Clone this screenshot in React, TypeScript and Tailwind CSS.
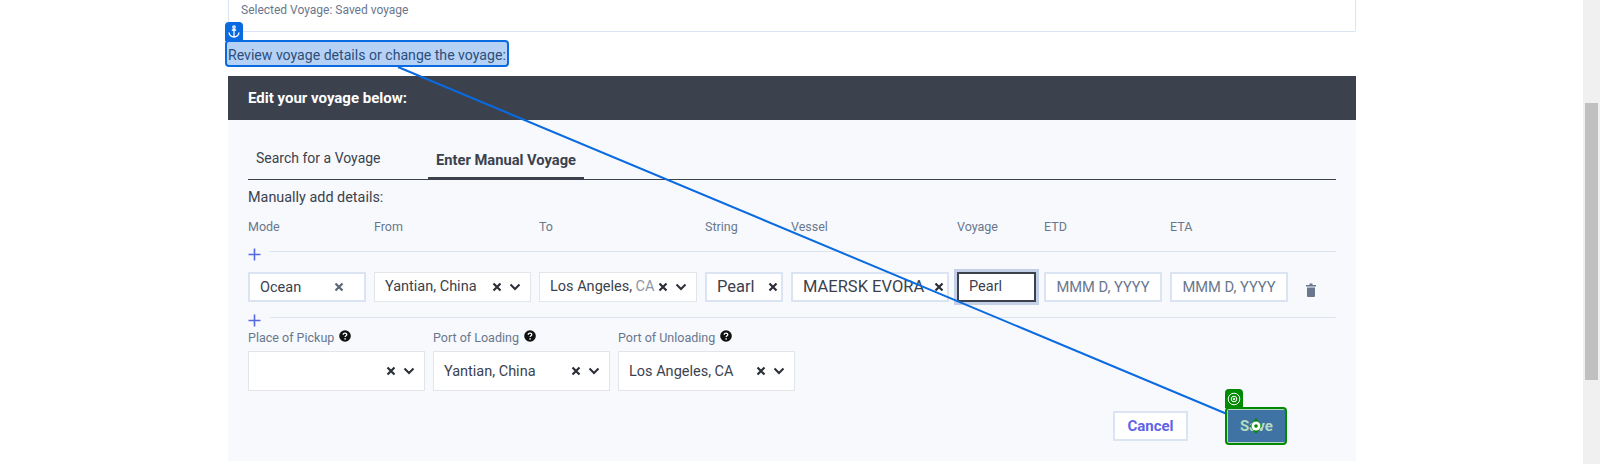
import React from "react";

const X = ({ c = "#2b2f36" }: { c?: string }) => (
  <svg width="10" height="10" viewBox="0 0 10 10" className="shrink-0">
    <path d="M1.5 1.5l7 7M8.5 1.5l-7 7" stroke={c} strokeWidth="2.2" />
  </svg>
);
const Chev = () => (
  <svg width="12" height="8" viewBox="0 0 12 8" className="shrink-0">
    <path d="M1.5 1.5L6 6l4.5-4.5" stroke="#2b2f36" strokeWidth="2" fill="none" />
  </svg>
);
const Plus = () => (
  <svg width="13" height="13" viewBox="0 0 13 13" className="shrink-0">
    <path d="M6.5 0.5v12M0.5 6.5h12" stroke="#5468e0" strokeWidth="1.6" />
  </svg>
);
const Help = () => (
  <svg width="12" height="12" viewBox="0 0 12 12" className="shrink-0">
    <circle cx="6" cy="6" r="5.8" fill="#111" />
    <path d="M4.2 4.7c0-1 .8-1.6 1.8-1.6s1.8.6 1.8 1.5c0 1.2-1.7 1.2-1.7 2.5" stroke="#fff" strokeWidth="1.3" fill="none" />
    <circle cx="6.1" cy="8.9" r=".8" fill="#fff" />
  </svg>
);
const Divider = () => (
  <div className="flex items-center gap-[9px] h-[13px]">
    <Plus />
    <div className="flex-1 h-px bg-[#dde4f1] -mt-[6px]" />
  </div>
);
const Label = ({ children, className = "" }: { children: React.ReactNode; className?: string }) => (
  <span className={"text-[12.5px] leading-[16px] text-[#69778d] " + className}>{children}</span>
);
const SelectBox = ({ text, tall, w }: { text?: React.ReactNode; tall?: boolean; w: string }) => (
  <div className={`${w} ${tall ? "h-[40px]" : "h-[30px]"} flex items-center bg-white border border-[#e2e5ea] pl-[10px] pr-[9px] text-[14.5px] text-[#3b424e]`}>
    <span className={`flex-1 min-w-0 whitespace-nowrap ${tall ? "mt-[1px]" : "-mt-[1px]"}`}>{text}</span>
    <span className="flex items-center gap-[7px] ml-[6px]">
      <X />
      <Chev />
    </span>
  </div>
);
const Field = ({ children, w, x = "#2b2f36", pr, big }: { children: React.ReactNode; w: string; x?: string; pr: string; big?: boolean }) => (
  <div className={`${w} ${pr} h-[30px] flex items-center bg-white border-2 border-[#dbe4f3] pl-[10px] ${big ? "text-[16.5px]" : "text-[14.5px]"} text-[#3b424e]`}>
    <span className="flex-1 min-w-0 whitespace-nowrap mt-[1px]">{children}</span>
    <X c={x} />
  </div>
);
const DateField = ({ w }: { w: string }) => (
  <div className={`${w} h-[30px] flex items-center justify-center bg-white border-2 border-[#dbe4f3] text-[14.7px] text-[#69778d]`}>
    MMM D, YYYY
  </div>
);

export default function App() {
  return (
    <div className="relative h-[464px] overflow-hidden bg-white flex font-['Roboto','Liberation_Sans',sans-serif]">
      <div className="flex-1 min-w-0 pl-[228px] pr-[227px]">
        <div className="h-[32px] border border-t-0 border-[#dbe4f3] rounded-b-[2px] pl-[12px] pt-[2px] text-[12px] leading-[17px] text-[#69778d]">
          Selected Voyage: Saved voyage
        </div>
        <div className="h-[44px] pt-[13px] text-[14.1px] leading-[20px] text-[#3b424e]">
          Review voyage details or change the voyage:
        </div>
        <div className="h-[44px] bg-[#3b424e] pl-[20px] flex items-center text-[15px] font-bold text-white">
          Edit your voyage below:
        </div>
        <div className="h-[341px] bg-[#f7f9fd] px-[20px]">
          <div className="h-[60px] flex items-end border-b border-[#3b424e] text-[14px] text-[#3b424e]">
            <div className="w-[180px] pl-[8px] h-[44px] pt-[13px]">Search for a Voyage</div>
            <div className="w-[156px] h-[44px] pt-[13px] text-center text-[14.7px] font-bold border-b-[3px] border-[#3b424e] -mb-px">Enter Manual Voyage</div>
          </div>
          <div className="pt-[8px] text-[14.4px] leading-[20px] text-[#3b424e]">Manually add details:</div>
          <div className="mt-[11px] flex h-[16px]">
            <Label className="w-[126px]">Mode</Label>
            <Label className="w-[165px]">From</Label>
            <Label className="w-[166px]">To</Label>
            <Label className="w-[86px]">String</Label>
            <Label className="w-[166px]">Vessel</Label>
            <Label className="w-[87px]">Voyage</Label>
            <Label className="w-[126px]">ETD</Label>
            <Label>ETA</Label>
          </div>
          <div className="mt-[13px]"><Divider /></div>
          <div className="mt-[11px] flex items-center">
            <Field w="w-[118px] mr-[8px]" x="#5c6675" pr="pr-[20px]">Ocean</Field>
            <SelectBox w="w-[157px] mr-[8px]" text="Yantian, China" />
            <SelectBox
              w="w-[158px] mr-[8px]"
              text={
                <>
                  Los Angeles, <span className="text-[#8d96a5]">CA</span>
                </>
              }
            />
            <Field w="w-[78px] mr-[8px]" big pr="pr-[3px]">Pearl</Field>
            <Field w="w-[158px] mr-[8px]" big pr="pr-[3px]">MAERSK EVORA</Field>
            <div className="w-[79px] mr-[8px] h-[30px] flex items-center bg-white border-2 border-[#3b424e] outline-[3px] outline-[#c3d0e6] pl-[10px] text-[14.5px] text-[#3b424e]">Pearl</div>
            <DateField w="w-[118px] mr-[8px]" />
            <DateField w="w-[118px] mr-[18px]" />
            <svg width="10" height="14" viewBox="0 0 10 14" className="mt-[6px]">
              <path d="M0 2h10v1.5H0zM3.5 0.5h3V2h-3zM1 4.5h8V13a1 1 0 0 1-1 1H2a1 1 0 0 1-1-1z" fill="#69778d" />
            </svg>
          </div>
          <div className="mt-[12px]"><Divider /></div>
          <div className="mt-[3px] flex gap-[8px]">
            {[
              ["Place of Pickup", ""],
              ["Port of Loading", "Yantian, China"],
              ["Port of Unloading", "Los Angeles, CA"],
            ].map(([l, v]) => (
              <div key={l} className="w-[177px]">
                <div className="h-[21px] flex items-start gap-[5px]">
                  <Label>{l}</Label>
                  <Help />
                </div>
                <SelectBox w="w-[177px]" tall text={v} />
              </div>
            ))}
          </div>
          <div className="mt-[18px] flex justify-end pr-[50px] gap-[39px] items-center">
            <button className="w-[75px] h-[30px] bg-white border-2 border-[#dbe4f3] text-[15px] font-bold text-[#5f63e8]">Cancel</button>
            <button className="w-[59px] h-[34px] bg-[#3f73a3] border border-[#b9d5c9] text-[15px] font-bold text-[#b5dcc0]">Save</button>
          </div>
        </div>
      </div>

      <div className="w-[17px] bg-[#f0f0f0] pl-[2px] pt-[103px]">
        <div className="w-[13px] h-[277px] bg-[#c0c0c0]" />
      </div>

      {/* annotation overlay */}
      <div className="absolute left-[225px] top-[40px] w-[284px] h-[27px] rounded-[4px] border-2 border-[#0a6ae0] bg-[#0a6ae0]/30" />
      <div className="absolute left-[225px] top-[22px] w-[18px] h-[19px] rounded-t-[4px] bg-[#0a6ae0] flex items-center justify-center">
        <svg width="12" height="13" viewBox="0 0 12 13" fill="none" stroke="#fff" strokeWidth="1.3">
          <circle cx="6" cy="2" r="1.2" />
          <path d="M6 3.2V12M3.8 5h4.4M1 7.5c0 2.5 2.5 4.5 5 4.5s5-2 5-4.5" />
        </svg>
      </div>
      <svg className="absolute left-0 top-0 pointer-events-none" width="1600" height="464">
        <line x1="398" y1="67" x2="1227" y2="414" stroke="#0a6ae0" strokeWidth="2" />
      </svg>
      <div className="absolute left-[1225px] top-[407px] w-[62px] h-[38px] rounded-[4px] border-2 border-[#008a00]" />
      <div className="absolute left-[1225px] top-[389px] w-[18px] h-[19px] rounded-t-[4px] bg-[#008a00] flex items-center justify-center">
        <svg width="14" height="14" viewBox="0 0 14 14" fill="none" stroke="#fff" strokeWidth="1">
          <circle cx="7" cy="7" r="5.8" />
          <circle cx="7" cy="7" r="2.8" />
          <circle cx="7" cy="7" r=".8" fill="#fff" />
        </svg>
      </div>
      <svg className="absolute left-[1248px] top-[418px]" width="16" height="16" viewBox="0 0 16 16">
        <path d="M8 0L14 8 8 16 2 8z" fill="#008a00" />
        <circle cx="8" cy="8" r="4.5" fill="#fff" />
        <circle cx="8" cy="8" r="1.8" fill="#008a00" />
      </svg>
    </div>
  );
}
